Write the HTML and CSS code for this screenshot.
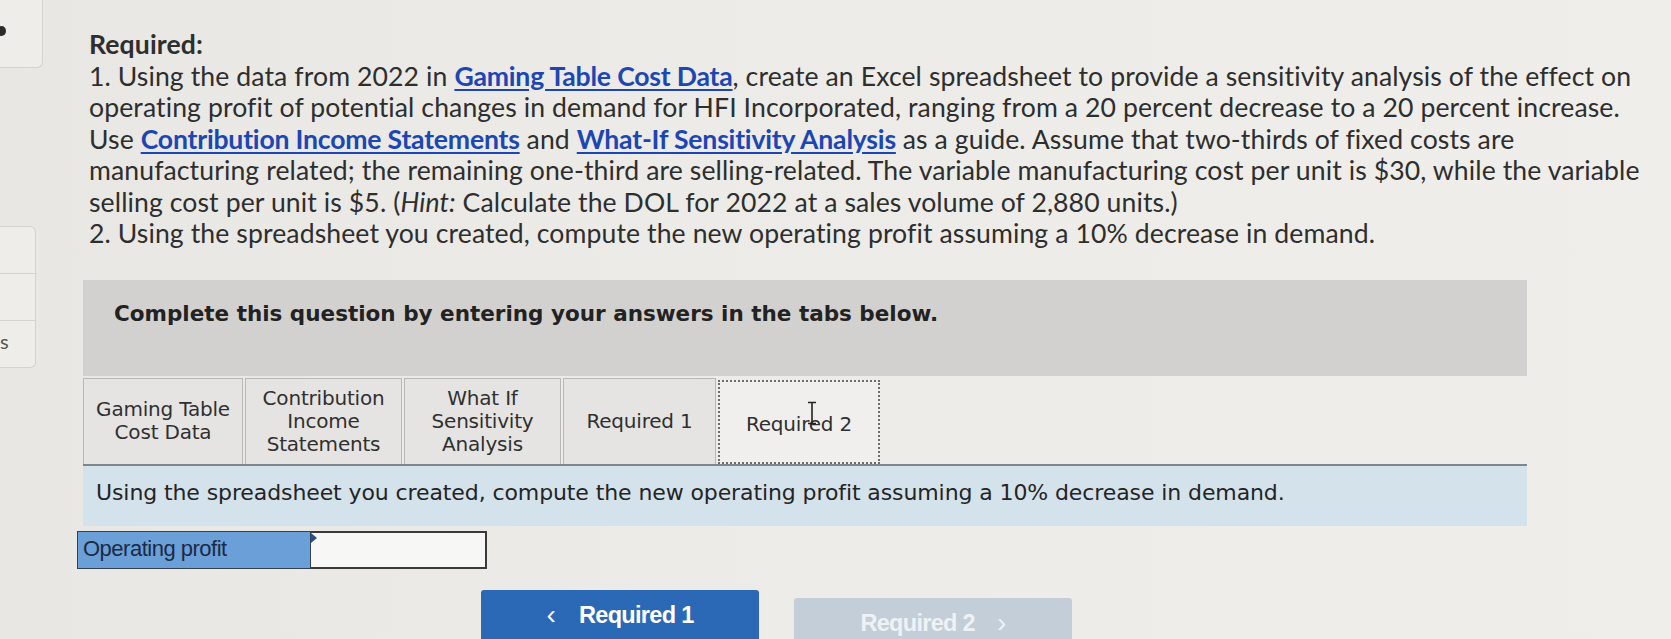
FILE: index.html
```html
<!DOCTYPE html>
<html lang="en">
<head>
<meta charset="utf-8">
<title>Required</title>
<link rel="stylesheet" href="styles.css">
</head>
<body>
<div class="page">
  <aside class="rail">
    <div class="rail-top"><span class="rail-dot"></span></div>
    <div class="rail-list">
      <div class="rail-item"></div>
      <div class="rail-item"></div>
      <div class="rail-item"><span class="rail-label">s</span></div>
    </div>
  </aside>
  <main class="content">
    <section class="prompt">
      <h2 class="prompt-title">Required:</h2>
      <p class="prompt-text">1. Using the data from 2022 in <a class="link" href="#">Gaming Table Cost Data</a>, create an Excel spreadsheet to provide a sensitivity analysis of the effect on<br>operating profit of potential changes in demand for HFI Incorporated, ranging from a 20 percent decrease to a 20 percent increase.<br>Use <a class="link" href="#">Contribution Income Statements</a> and <a class="link" href="#">What-If Sensitivity Analysis</a> as a guide. Assume that two-thirds of fixed costs are<br>manufacturing related; the remaining one-third are selling-related. The variable manufacturing cost per unit is $30, while the variable<br>selling cost per unit is $5. (<em>Hint:</em> Calculate the DOL for 2022 at a sales volume of 2,880 units.)</p>
      <p class="prompt-text">2. Using the spreadsheet you created, compute the new operating profit assuming a 10% decrease in demand.</p>
    </section>

    <div class="instructions">Complete this question by entering your answers in the tabs below.</div>

    <div class="tabs">
      <div class="tab tab-1">Gaming Table<br>Cost Data</div>
      <div class="tab tab-2">Contribution<br>Income<br>Statements</div>
      <div class="tab tab-3">What If<br>Sensitivity<br>Analysis</div>
      <div class="tab tab-4">Required 1</div>
      <div class="tab tab-5 tab-active">Required 2
        <svg class="cursor" width="12" height="24" viewBox="0 0 12 24" aria-hidden="true">
          <path d="M2 1.5 H10 M6 1.5 V22.5 M2 22.5 H10" stroke="#222" stroke-width="1.6" fill="none"/>
        </svg>
      </div>
    </div>

    <div class="question-bar">Using the spreadsheet you created, compute the new operating profit assuming a 10% decrease in demand.</div>

    <div class="answer-row">
      <div class="answer-label">Operating profit</div>
      <div class="answer-input"><span class="answer-marker"></span></div>
    </div>

    <div class="nav">
      <button class="btn btn-prev"><span class="chev">&#8249;</span>Required 1</button>
      <button class="btn btn-next">Required 2<span class="chev chev-right">&#8250;</span></button>
    </div>
  </main>
</div>
</body>
</html>
```

FILE: styles.css
```css
* { box-sizing: border-box; }

html, body {
  margin: 0;
  padding: 0;
  width: 1671px;
  height: 639px;
  overflow: hidden;
}

body {
  background: linear-gradient(90deg, #e8e7e4 0%, #ecebe8 40%, #efeeeb 100%);
  color: #2e2e2e;
  font-family: "Lato", "Liberation Sans", sans-serif;
}

.page {
  display: flex;
  align-items: flex-start;
}

/* left rail fragments */
.rail {
  width: 44px;
  flex: 0 0 44px;
  display: flex;
  flex-direction: column;
}

.rail-top {
  position: relative;
  width: 43px;
  height: 68px;
  border-right: 1px solid #d3d3d0;
  border-bottom: 1px solid #d3d3d0;
  border-bottom-right-radius: 6px;
  background: #eeedea;
}

.rail-dot {
  position: absolute;
  left: -3px;
  top: 26px;
  width: 9px;
  height: 10px;
  border-radius: 50%;
  background: #2b2b2b;
}

.rail-list {
  margin-top: 158px;
  width: 36px;
  border: 1px solid #d3d3d0;
  border-left: none;
  border-radius: 0 6px 6px 0;
  background: #eeedea;
}

.rail-item {
  height: 47px;
  border-bottom: 1px solid #d3d3d0;
}

.rail-item:last-child {
  border-bottom: none;
  height: 46px;
}

.rail-label {
  display: block;
  padding-top: 8px;
  font-family: "Lato", sans-serif;
  font-size: 20px;
  color: #555;
}

/* main content */
.content {
  margin-left: 39px;
  width: 1444px;
}

.prompt {
  padding: 29px 0 0 6px;
  width: 1620px;
}

.prompt-title,
.prompt-text {
  margin: 0;
  font-size: 26.6px;
  line-height: 31.5px;
  font-weight: 400;
  color: #2e2e2e;
  white-space: nowrap;
  letter-spacing: 0.1px;
}

.prompt-title {
  font-weight: 700;
}

.link {
  color: #1c46b3;
  font-weight: 700;
  text-decoration: underline;
  text-underline-offset: 3px;
  letter-spacing: -0.2px;
}

.prompt-text em {
  font-style: italic;
}

.instructions {
  margin-top: 30px;
  height: 96px;
  padding: 21px 0 0 31px;
  background: #d2d1cf;
  font-family: "DejaVu Sans", Verdana, sans-serif;
  font-weight: 700;
  font-size: 21.5px;
  line-height: 26px;
  color: #222;
}

/* tabs */
.tabs {
  margin-top: 2px;
  display: flex;
  gap: 2px;
  align-items: flex-end;
}

.tab {
  position: relative;
  height: 86px;
  display: flex;
  align-items: center;
  justify-content: center;
  text-align: center;
  background: #e5e4e2;
  border: 1px solid #b8b8b6;
  border-bottom: none;
  font-family: "DejaVu Sans", Verdana, sans-serif;
  font-size: 20px;
  line-height: 23px;
  color: #303030;
  letter-spacing: -0.2px;
}

.tab-1 { width: 160px; }
.tab-2 { width: 157px; }
.tab-3 { width: 157px; }
.tab-4 { width: 153px; }
.tab-5 { width: 162px; }

.tab-active {
  height: 84px;
  background: #f0efed;
  border: 2px dotted #6d6d6d;
  padding-top: 6px;
}

.cursor {
  position: absolute;
  left: 86px;
  top: 19px;
}

/* question bar */
.question-bar {
  height: 62px;
  padding: 14px 0 0 13px;
  background: #d4e2eb;
  border-top: 2px solid #7e868c;
  font-family: "DejaVu Sans", Verdana, sans-serif;
  font-size: 22px;
  line-height: 26px;
  letter-spacing: -0.1px;
  color: #242424;
}

/* answer row */
.answer-row {
  margin-top: 5px;
  margin-left: -6px;
  display: flex;
  height: 38px;
}

.answer-label {
  width: 234px;
  height: 38px;
  padding: 4px 0 0 5px;
  background: #6b9fd8;
  border: 1px solid #33404f;
  font-family: "Liberation Sans", Arial, sans-serif;
  font-size: 22px;
  line-height: 25px;
  letter-spacing: -0.5px;
  color: #1b2a47;
}

.answer-input {
  position: relative;
  width: 176px;
  height: 38px;
  background: #f7f7f5;
  border: 2px solid #3a3a3a;
  border-left: none;
}

.answer-marker {
  position: absolute;
  left: 0;
  top: 0;
  width: 0;
  height: 0;
  border-top: 5px solid transparent;
  border-bottom: 5px solid transparent;
  border-left: 6px solid #2b4f8a;
}

/* navigation */
.nav {
  margin-top: 21px;
  padding-left: 398px;
  display: flex;
  gap: 35px;
}

.btn {
  width: 278px;
  height: 60px;
  border: none;
  border-radius: 3px;
  padding: 11px 0 0 0;
  display: flex;
  justify-content: center;
  align-items: flex-start;
  font-family: "Liberation Sans", Arial, sans-serif;
  font-weight: 700;
  font-size: 23.5px;
  line-height: 28px;
  letter-spacing: -0.7px;
}

.btn-prev {
  background: #2b68b6;
  color: #ffffff;
}

.btn-next {
  margin-top: 8px;
  background: #c3ced8;
  color: #eef2f5;
}

.chev {
  margin-right: 24px;
  font-weight: 400;
  font-size: 28px;
}

.chev-right {
  margin-right: 0;
  margin-left: 22px;
}
```
